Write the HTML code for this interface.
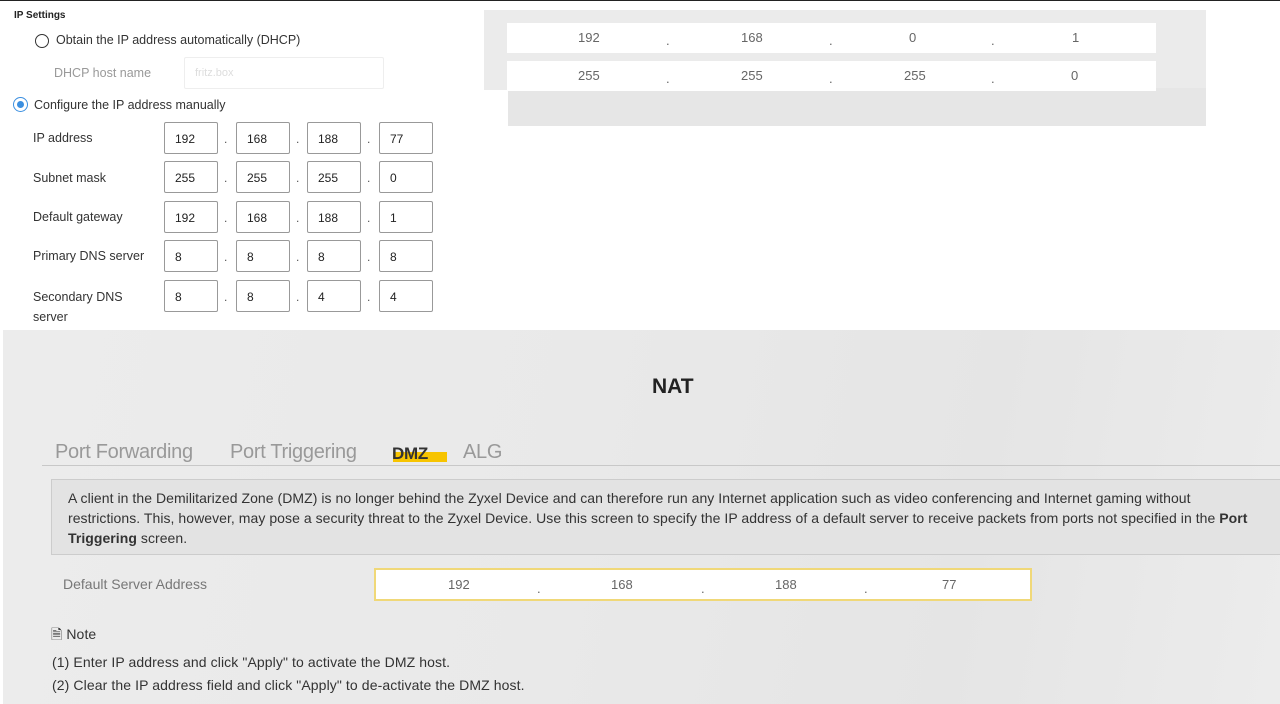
<!DOCTYPE html>
<html><head><meta charset="utf-8"><style>
*{margin:0;padding:0;box-sizing:border-box}
body{width:1280px;height:704px;overflow:hidden;background:#fff;position:relative;font-family:"Liberation Sans",sans-serif}
.a{position:absolute}
.t{font-size:12.5px;color:#333}
.box{position:absolute;width:54px;height:32px;border:1px solid #999;border-radius:2px;background:#fff;font-size:12px;color:#222;padding:9px 0 0 10px}
.dot{position:absolute;font-size:12px;color:#555}
.w{position:absolute;background:#fff;height:30px;font-size:13px;color:#666}
.w span{position:absolute;top:7px}
.tab{position:absolute;top:441px;font-size:20px;color:#999;letter-spacing:-0.3px}
.n{position:absolute;font-size:14px;letter-spacing:0.1px;color:#333}
</style></head><body>
<div class="a" style="left:0;top:0;width:1280px;height:1px;background:#222"></div>
<div class="a" style="left:14px;top:10px;font-size:10px;font-weight:bold;color:#222">IP Settings</div>
<div class="a" style="left:35px;top:34px;width:14px;height:14px;border:1.5px solid #333;border-radius:50%"></div>
<div class="a t" style="left:56px;top:33px">Obtain the IP address automatically (DHCP)</div>
<div class="a t" style="left:54px;top:66px;color:#999">DHCP host name</div>
<div class="a" style="left:184px;top:57px;width:200px;height:32px;border:1px solid #eee;border-radius:2px;font-size:11px;color:#ddd;padding:9px 10px">fritz.box</div>
<div class="a" style="left:13px;top:97px;width:15px;height:15px;border:1.5px solid #3b8fe0;border-radius:50%"><div style="margin:2.5px;width:7px;height:7px;border-radius:50%;background:#3b8fe0"></div></div>
<div class="a t" style="left:34px;top:98px">Configure the IP address manually</div>
<div class="a t" style="left:33px;top:131px">IP address</div>
<div class="a t" style="left:33px;top:171px">Subnet mask</div>
<div class="a t" style="left:33px;top:210px">Default gateway</div>
<div class="a t" style="left:33px;top:249px">Primary DNS server</div>
<div class="a t" style="left:33px;top:287px;line-height:20px">Secondary DNS<br>server</div>
<div id="grid"></div>
<script>
var rows=[[122,["192","168","188","77"]],[161,["255","255","255","0"]],[201,["192","168","188","1"]],[240,["8","8","8","8"]],[280,["8","8","4","4"]]];
var xs=[164,236,307,379],h="";
rows.forEach(function(r){r[1].forEach(function(v,i){h+='<div class="box" style="left:'+xs[i]+'px;top:'+r[0]+'px">'+v+'</div>';if(i<3)h+='<div class="dot" style="left:'+(xs[i]+60)+'px;top:'+(r[0]+10)+'px">.</div>'})});
document.getElementById("grid").outerHTML=h;
</script>
<div class="a" style="left:484px;top:10px;width:722px;height:80px;background:#ebebeb"></div>
<div class="a" style="left:508px;top:88px;width:698px;height:38px;background:#e6e6e6"></div>
<div class="w" style="left:507px;top:23px;width:649px"><span style="left:71px">192</span><span style="left:159px;top:10px">.</span><span style="left:234px">168</span><span style="left:322px;top:10px">.</span><span style="left:402px">0</span><span style="left:484px;top:10px">.</span><span style="left:565px">1</span></div>
<div class="w" style="left:507px;top:61px;width:649px"><span style="left:71px">255</span><span style="left:159px;top:10px">.</span><span style="left:234px">255</span><span style="left:322px;top:10px">.</span><span style="left:397px">255</span><span style="left:484px;top:10px">.</span><span style="left:564px">0</span></div>
<div class="a" style="left:3px;top:330px;width:1277px;height:374px;background:linear-gradient(100deg,#ececec 0%,#e9e9e9 45%,#e5e5e5 75%,#ececec 100%)"></div>
<div class="a" style="left:652px;top:375px;font-size:21px;font-weight:bold;color:#222">NAT</div>
<div class="tab" style="left:55px">Port Forwarding</div>
<div class="tab" style="left:230px">Port Triggering</div>
<div class="a" style="left:393px;top:452px;width:54px;height:10px;background:#f7c400"></div>
<div class="tab" style="left:392px;color:#333;font-weight:bold;font-size:17px;top:444px">DMZ</div>
<div class="tab" style="left:463px">ALG</div>
<div class="a" style="left:42px;top:465px;width:1238px;height:1px;background:#c8c8c8"></div>
<div class="a" style="left:51px;top:479px;width:1229px;height:76px;background:#e3e3e3;border:1px solid #ccc;border-right:none;padding:8px 16px;font-size:14px;letter-spacing:0.05px;line-height:20px;color:#333;white-space:nowrap">A client in the Demilitarized Zone (DMZ) is no longer behind the Zyxel Device and can therefore run any Internet application such as video conferencing and Internet gaming without<br>restrictions. This, however, may pose a security threat to the Zyxel Device. Use this screen to specify the IP address of a default server to receive packets from ports not specified in the <b>Port</b><br><b>Triggering</b> screen.</div>
<div class="a" style="left:63px;top:576px;font-size:14px;color:#777">Default Server Address</div>
<div class="w" style="left:374px;top:568px;width:658px;height:33px;border:2px solid #f0d878"><span style="left:72px">192</span><span style="left:161px;top:11px">.</span><span style="left:235px">168</span><span style="left:325px;top:11px">.</span><span style="left:399px">188</span><span style="left:488px;top:11px">.</span><span style="left:566px">77</span></div>
<div class="n" style="left:51px;top:624px">🗎 Note</div>
<div class="n" style="left:52px;top:654px">(1) Enter IP address and click "Apply" to activate the DMZ host.</div>
<div class="n" style="left:52px;top:677px">(2) Clear the IP address field and click "Apply" to de-activate the DMZ host.</div>
</body></html>
